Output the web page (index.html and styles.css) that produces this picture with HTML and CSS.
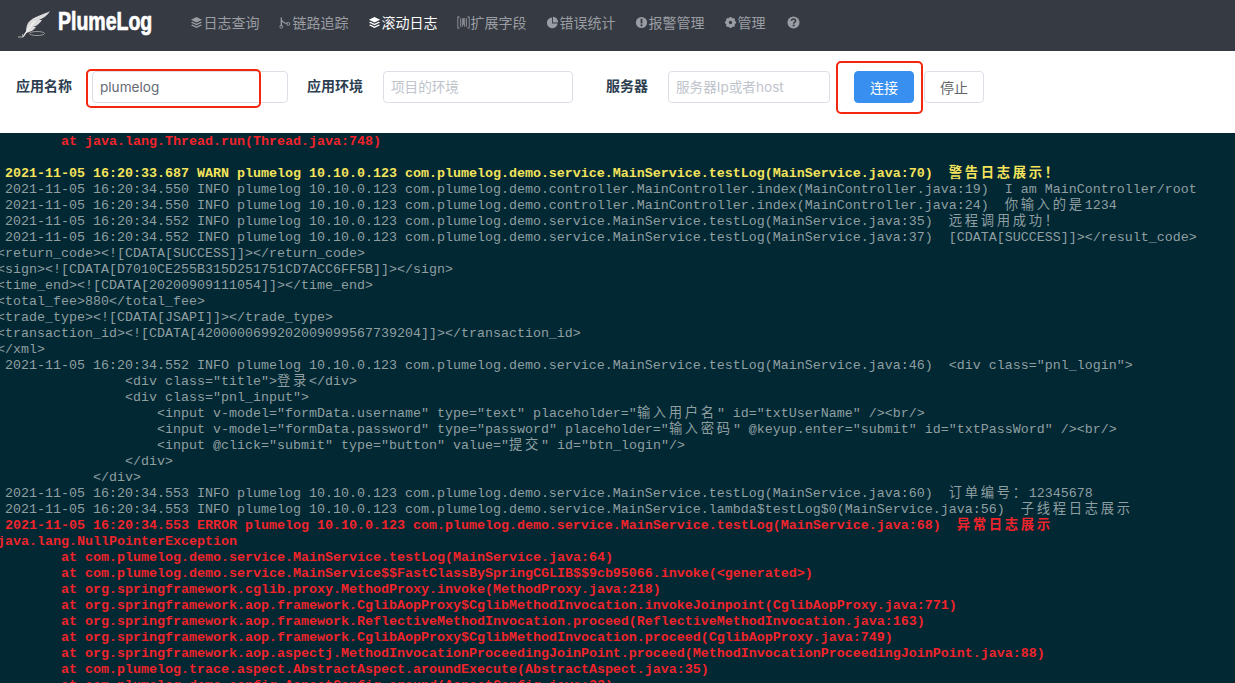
FILE: index.html
```html
<!DOCTYPE html>
<html lang="zh">
<head>
<meta charset="utf-8">
<title>PlumeLog</title>
<link rel="stylesheet" href="styles.css">
</head>
<body>
<nav class="nav">
  <a class="brand">
    <svg class="feather" viewBox="0 0 34 28" width="34" height="28"><path d="M33 1C26 5 16 6 11 13 9 17 9 20 9 23 14 22 17 20 19 17L16 17C20 16 23 13 25 10L22 10C27 8 31 5 33 1Z" fill="#dcdcdc"/><path d="M18 11C13 17 9 22 6 27" stroke="#f0f0f0" stroke-width="1.200" fill="none"/><path d="M1 27H6L5.500 24" stroke="#b5b5b5" stroke-width="1" fill="none"/><ellipse cx="20" cy="23.500" rx="7.500" ry="2" fill="none" stroke="#9a9a9a"/></svg>
    <span class="brand-name">PlumeLog</span>
  </a>
  <a class="nav-item"><svg class="ic" viewBox="0 0 14 14"><use href="#layers"/></svg>日志查询</a>
  <a class="nav-item"><svg class="ic" viewBox="0 0 14 14"><path d="M2.500 1.500V11" stroke="currentColor" stroke-width="1.400" fill="none"/><path d="M2.500 4C4 7 6 8 9 8" stroke="currentColor" stroke-width="1.200" fill="none"/><circle cx="2.500" cy="11.500" r="1.600" fill="none" stroke="currentColor"/><circle cx="10" cy="8.500" r="1.600" fill="none" stroke="currentColor"/></svg>链路追踪</a>
  <a class="nav-item active"><svg class="ic" viewBox="0 0 14 14"><use href="#layers"/></svg>滚动日志</a>
  <a class="nav-item"><svg class="ic" viewBox="0 0 16 12" preserveAspectRatio="none"><path d="M3 1H1V11H3M13 1H15V11H13" stroke="currentColor" fill="none"/><path d="M4.500 2V10M6.500 2V10M8 2V8M9.500 2V10M11.500 2V10" stroke="currentColor" fill="none"/></svg>扩展字段</a>
  <a class="nav-item"><svg class="ic" viewBox="0 0 14 14"><path d="M7.500 0.800A6 6 0 0 1 13 7H7.500Z" fill="currentColor"/><path d="M6.500 1.500A5.800 5.800 0 1 0 12.500 8H6.500Z" fill="currentColor"/></svg>错误统计</a>
  <a class="nav-item"><svg class="ic" viewBox="0 0 14 14"><circle cx="7" cy="7" r="6" fill="currentColor"/><rect x="6" y="3" width="2" height="5" fill="#363a42"/><rect x="6" y="9" width="2" height="2" fill="#363a42"/></svg>报警管理</a>
  <a class="nav-item gear"><svg class="ic" viewBox="0 0 14 14"><circle cx="7" cy="7" r="3.800" fill="none" stroke="currentColor" stroke-width="2.800"/><path d="M7 1V13M1 7H13M2.800 2.800L11.200 11.200M11.200 2.800L2.800 11.200" stroke="currentColor" stroke-width="2.200"/><circle cx="7" cy="7" r="1.800" fill="#363a42"/></svg>管理</a>
  <a class="nav-item"><svg class="ic help" viewBox="0 0 14 14"><circle cx="7" cy="7" r="6.500" fill="currentColor"/><path d="M4.800 5.300C4.900 3.900 5.900 3.300 7 3.300 8.300 3.300 9.300 4 9.300 5.200 9.300 6.700 7.200 6.600 7.200 8.300" fill="none" stroke="#363a42" stroke-width="1.600"/><rect x="6.200" y="9.300" width="2" height="1.800" fill="#363a42"/></svg></a>
</nav>
<svg class="defs" width="0" height="0"><defs><g id="layers"><path d="M7 1L13 4 7 7 1 4Z" fill="currentColor"/><path d="M2.500 6.200L1 7 7 10 13 7 11.500 6.200 7 8.400Z" fill="currentColor"/><path d="M2.500 9.200L1 10 7 13 13 10 11.500 9.200 7 11.400Z" fill="currentColor"/></g></defs></svg>
<form class="toolbar">
  <label class="label">应用名称</label>
  <div class="field-mark"><input class="input app" value="plumelog"><span class="mark mark-input"></span></div>
  <label class="label env">应用环境</label>
  <input class="input envi" placeholder="项目的环境">
  <label class="label server">服务器</label>
  <input class="input host" placeholder="服务器Ip或者host">
  <div class="btn-mark"><button type="button" class="btn primary">连接</button><span class="mark mark-btn"></span></div>
  <button type="button" class="btn">停止</button>
</form>
<main class="log">
<pre class="err">	at java.lang.Thread.run(Thread.java:748)</pre>
<pre> </pre>
<pre class="warn"> 2021-11-05 16:20:33.687 WARN plumelog 10.10.0.123 com.plumelog.demo.service.MainService.testLog(MainService.java:70)  <span class="cjk">警告日志展示！</span></pre>
<pre> 2021-11-05 16:20:34.550 INFO plumelog 10.10.0.123 com.plumelog.demo.controller.MainController.index(MainController.java:19)  I am MainController/root</pre>
<pre> 2021-11-05 16:20:34.550 INFO plumelog 10.10.0.123 com.plumelog.demo.controller.MainController.index(MainController.java:24)  <span class="cjk">你输入的是</span>1234</pre>
<pre> 2021-11-05 16:20:34.552 INFO plumelog 10.10.0.123 com.plumelog.demo.service.MainService.testLog(MainService.java:35)  <span class="cjk">远程调用成功！</span></pre>
<pre> 2021-11-05 16:20:34.552 INFO plumelog 10.10.0.123 com.plumelog.demo.service.MainService.testLog(MainService.java:37)  [CDATA[SUCCESS]]&gt;&lt;/result_code&gt;</pre>
<pre>&lt;return_code&gt;&lt;![CDATA[SUCCESS]]&gt;&lt;/return_code&gt;</pre>
<pre>&lt;sign&gt;&lt;![CDATA[D7010CE255B315D251751CD7ACC6FF5B]]&gt;&lt;/sign&gt;</pre>
<pre>&lt;time_end&gt;&lt;![CDATA[20200909111054]]&gt;&lt;/time_end&gt;</pre>
<pre>&lt;total_fee&gt;880&lt;/total_fee&gt;</pre>
<pre>&lt;trade_type&gt;&lt;![CDATA[JSAPI]]&gt;&lt;/trade_type&gt;</pre>
<pre>&lt;transaction_id&gt;&lt;![CDATA[4200000699202009099567739204]]&gt;&lt;/transaction_id&gt;</pre>
<pre>&lt;/xml&gt;</pre>
<pre> 2021-11-05 16:20:34.552 INFO plumelog 10.10.0.123 com.plumelog.demo.service.MainService.testLog(MainService.java:46)  &lt;div class="pnl_login"&gt;</pre>
<pre>		&lt;div class="title"&gt;<span class="cjk">登录</span>&lt;/div&gt;</pre>
<pre>		&lt;div class="pnl_input"&gt;</pre>
<pre>		    &lt;input v-model="formData.username" type="text" placeholder="<span class="cjk">输入用户名</span>" id="txtUserName" /&gt;&lt;br/&gt;</pre>
<pre>		    &lt;input v-model="formData.password" type="password" placeholder="<span class="cjk">输入密码</span>" @keyup.enter="submit" id="txtPassWord" /&gt;&lt;br/&gt;</pre>
<pre>		    &lt;input @click="submit" type="button" value="<span class="cjk">提交</span>" id="btn_login"/&gt;</pre>
<pre>		&lt;/div&gt;</pre>
<pre>	    &lt;/div&gt;</pre>
<pre> 2021-11-05 16:20:34.553 INFO plumelog 10.10.0.123 com.plumelog.demo.service.MainService.testLog(MainService.java:60)  <span class="cjk">订单编号：</span>12345678</pre>
<pre> 2021-11-05 16:20:34.553 INFO plumelog 10.10.0.123 com.plumelog.demo.service.MainService.lambda$testLog$0(MainService.java:56)  <span class="cjk">子线程日志展示</span></pre>
<pre class="err"> 2021-11-05 16:20:34.553 ERROR plumelog 10.10.0.123 com.plumelog.demo.service.MainService.testLog(MainService.java:68)  <span class="cjk">异常日志展示</span></pre>
<pre class="err">java.lang.NullPointerException</pre>
<pre class="err">	at com.plumelog.demo.service.MainService.testLog(MainService.java:64)</pre>
<pre class="err">	at com.plumelog.demo.service.MainService$$FastClassBySpringCGLIB$$9cb95066.invoke(&lt;generated&gt;)</pre>
<pre class="err">	at org.springframework.cglib.proxy.MethodProxy.invoke(MethodProxy.java:218)</pre>
<pre class="err">	at org.springframework.aop.framework.CglibAopProxy$CglibMethodInvocation.invokeJoinpoint(CglibAopProxy.java:771)</pre>
<pre class="err">	at org.springframework.aop.framework.ReflectiveMethodInvocation.proceed(ReflectiveMethodInvocation.java:163)</pre>
<pre class="err">	at org.springframework.aop.framework.CglibAopProxy$CglibMethodInvocation.proceed(CglibAopProxy.java:749)</pre>
<pre class="err">	at org.springframework.aop.aspectj.MethodInvocationProceedingJoinPoint.proceed(MethodInvocationProceedingJoinPoint.java:88)</pre>
<pre class="err">	at com.plumelog.trace.aspect.AbstractAspect.aroundExecute(AbstractAspect.java:35)</pre>
<pre class="err">	at com.plumelog.demo.config.AspectConfig.around(AspectConfig.java:23)</pre>
</main>
</body>
</html>
```
FILE: styles.css
```css
* { box-sizing: border-box; }
html, body { height: 100%; }
body { margin: 0; height: 683px; overflow: hidden; background: #fff; font-family: "Inter", "Noto Sans CJK SC", sans-serif; display: flex; flex-direction: column; }
.defs { position: absolute; }
.nav { height: 51px; flex: none; background: #363a42; display: flex; align-items: center; padding-left: 17px; }
.brand { display: flex; align-items: center; width: 173px; flex: none; margin-top: -3px; }
.brand-name { margin-left: 7px; font: bold 25px "Liberation Sans", sans-serif; line-height: 28px; color: #fff; -webkit-text-stroke: .7px #fff; transform: scaleX(.78); transform-origin: left center; margin-top: -7px; white-space: nowrap; }
.nav-item { display: flex; align-items: center; font-size: 14px; color: #9a9da3; margin-right: 19.500px; font-family: "Noto Sans CJK SC", sans-serif; margin-top: -7px; white-space: nowrap; }
.nav-item.active { color: #fff; }
.nav-item.gear { margin-right: 21px; }
.ic { width: 13px; height: 13px; margin-right: .500px; flex: none; }
.ic.help { width: 13px; height: 13px; }
.toolbar { height: 82px; flex: none; display: flex; align-items: center; padding: 0 0 11px 16px; }
.label { font-size: 14px; font-weight: 700; color: #2c3e50; font-family: "Noto Sans CJK SC", sans-serif; white-space: nowrap; padding-bottom: 3px; }
.input { height: 32px; border: 1px solid #dcdfe6; border-radius: 4px; padding: 0 7px; font: 13.600px "Inter", "Noto Sans CJK SC", sans-serif; color: #666a72; outline: none; background: #fff; }
.input::placeholder { color: #c0c4cc; }
.field-mark, .btn-mark { position: relative; flex: none; }
.field-mark { margin-left: 20px; }
.app { width: 196px; padding-left: 7px; display: block; }
.env { margin-left: 19px; }
.envi { width: 190px; margin-left: 20px; }
.server { margin-left: 33px; }
.host { width: 162px; margin-left: 20px; }
.btn-mark { margin-left: 24px; }
.btn { height: 32px; width: 60px; border: 1px solid #dcdfe6; border-radius: 4px; background: #fff; color: #606266; font: 14px "Noto Sans CJK SC", sans-serif; padding: 0; margin-left: 10px; }
.btn.primary { background: #388ff0; border-color: #388ff0; color: #fff; margin-left: 0; display: block; }
.mark { position: absolute; border: 2px solid #f5260e; border-radius: 5px; pointer-events: none; }
.mark-input { left: -6px; top: -2px; width: 175px; height: 39px; }
.mark-btn { left: -18px; top: -10px; width: 87px; height: 53px; }
.log { flex: 1; min-height: 0; overflow: hidden; background: #022833; padding-top: 1px; }
.log pre { margin: 0 0 0 -3px; font: 13.330px/16px "Liberation Mono", "Noto Sans CJK SC", monospace; color: #8f9fa2; white-space: pre; tab-size: 8; }
.log pre.warn { color: #f5e35b; font-weight: 700; }
.log pre.err { color: #f0232b; font-weight: 700; }
.cjk { font-family: "Noto Sans CJK SC", sans-serif; line-height: 0; letter-spacing: 2.670px; }
```
